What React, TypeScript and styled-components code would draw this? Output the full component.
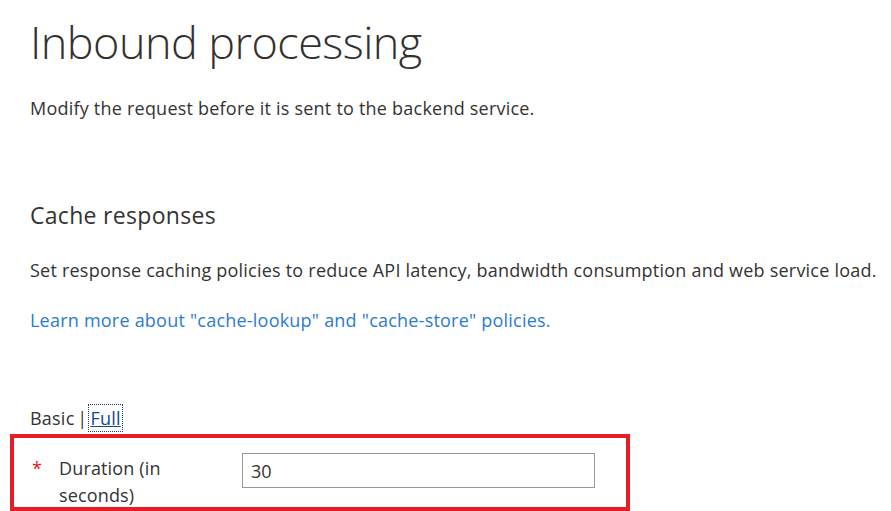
import React from 'react';
import styled, { createGlobalStyle } from 'styled-components';

const GlobalStyle = createGlobalStyle`
  html, body {
    margin: 0;
    padding: 0;
    background: #ffffff;
  }
  body {
    font-family: "Open Sans", "Noto Sans", "Liberation Sans", sans-serif;
    color: #333333;
  }
`;

const Page = styled.div`
  padding: 10px 0 0 30px;
  width: 861px;
  overflow: hidden;
`;

const Title = styled.h1`
  margin: 0;
  font-size: 45px;
  font-weight: 300;
  line-height: 64px;
  letter-spacing: -0.55px;
  color: #323130;
`;

const Body = styled.p`
  margin: 0;
  font-size: 18px;
  line-height: 24px;
  letter-spacing: 0.22px;
  white-space: nowrap;
`;

const Lead = styled(Body)`
  margin-top: 22px;
`;

const SectionTitle = styled.h2`
  margin: 80px 0 0;
  font-size: 23px;
  font-weight: 400;
  line-height: 30px;
  letter-spacing: 0.3px;
`;

const Description = styled(Body)`
  margin-top: 28px;
`;

const LearnLink = styled.a`
  display: inline-block;
  margin-top: 26px;
  font-size: 18px;
  line-height: 24px;
  letter-spacing: 0.22px;
  color: #2b7bd2;
  text-decoration: none;
`;

const ModeSwitch = styled(Body)`
  margin-top: 74px;
  word-spacing: -2px;
`;

const ModeLink = styled.a`
  color: #0f4a8a;
  text-decoration: underline;
  outline: 1px dotted #1b3b6b;
  outline-offset: 1px;
`;

const Highlight = styled.div`
  margin: 4px 0 0 -20px;
  width: 620px;
  height: 77px;
  box-sizing: border-box;
  border: 4px solid #e81c24;
  display: grid;
  grid-template-columns: 27px 183px 353px;
  align-items: start;
  padding: 15px 0 0 18px;
`;

const Required = styled.span`
  color: #e81123;
  font-size: 18px;
  line-height: 24px;
  padding-top: 3px;
`;

const FieldLabel = styled.label`
  padding-top: 2px;
  font-size: 18px;
  line-height: 27px;
  letter-spacing: 0.15px;
`;

const TextInput = styled.input`
  box-sizing: border-box;
  width: 353px;
  height: 35px;
  border: 1px solid #999999;
  padding: 0 8px;
  font-family: inherit;
  font-size: 18px;
  color: #333333;
  outline: none;
`;

export default function App() {
  return (
    <>
      <GlobalStyle />
      <Page>
        <Title>Inbound processing</Title>
        <Lead>Modify the request before it is sent to the backend service.</Lead>
        <SectionTitle>Cache responses</SectionTitle>
        <Description>
          Set response caching policies to reduce API latency, bandwidth consumption and web service load.
        </Description>
        <LearnLink href="#">Learn more about "cache-lookup" and "cache-store" policies.</LearnLink>
        <ModeSwitch>
          Basic | <ModeLink href="#">Full</ModeLink>
        </ModeSwitch>
        <Highlight>
          <Required>*</Required>
          <FieldLabel htmlFor="duration">
            Duration (in
            <br />
            seconds)
          </FieldLabel>
          <TextInput id="duration" defaultValue="30" />
        </Highlight>
      </Page>
    </>
  );
}
